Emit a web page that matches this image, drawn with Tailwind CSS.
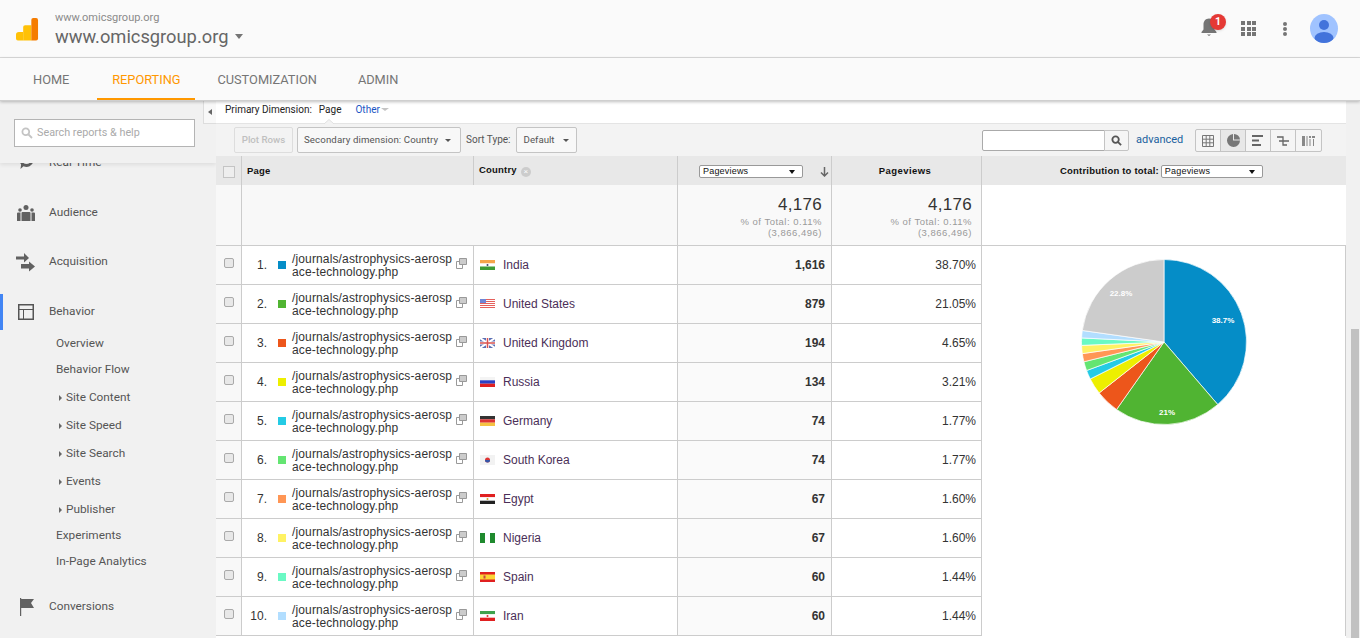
<!DOCTYPE html>
<html lang="en">
<head>
    <meta charset="UTF-8">
    <title>Analytics</title>
    <script src="https://cdn.jsdelivr.net/npm/@tailwindcss/browser@4"></script>
</head>
<body class="h-screen overflow-hidden bg-white font-['Roboto',sans-serif] text-[#333]">

    <!-- top bar -->
    <header class="h-[58px] flex items-center bg-[#fafafa] border-b border-[#dcdcdc] relative">
        <svg class="w-[23px] h-[23px] ml-4 shrink-0 mt-[2px]" viewBox="0 0 24 24">
            <path d="M0 17.500a3 3 0 0 1 3-3h4.500v9H2a2 2 0 0 1-2-2z" fill="#ffc107"/>
            <path d="M7.500 9.500a2 2 0 0 1 2-2h6.500v16h-8.500z" fill="#ffc107"/>
            <path d="M16 2a2 2 0 0 1 2-2h3a2 2 0 0 1 2 2v19.500a2 2 0 0 1-2 2h-5z" fill="#f57c00"/>
        </svg>
        <div class="ml-[16px] mt-[2px]">
            <div class="text-[11px] leading-[15px] text-[#8a8a8a]">www.omicsgroup.org</div>
            <div class="flex items-center text-[18.300px] leading-[24px] text-[#666]">
                www.omicsgroup.org
                <span class="ml-[7px] mt-[-1px] border-x-[4.500px] border-x-transparent border-t-[5px] border-t-[#757575]"></span>
            </div>
        </div>
        <div class="ml-auto flex items-center">
            <div class="relative w-[18px] h-[20px] mr-[23px] mb-[4px]">
                <svg class="w-[18px] h-[20px]" viewBox="0 0 18 20"><path d="M9 1.500c-3.500 0-5.500 2.800-5.500 6v5L1.500 15v1h15v-1l-2-2.500v-5c0-3.200-2-6-5.500-6zM7 17.500h4l-2 1.500z" fill="#757575"/></svg>
                <span class="absolute left-[10px] top-[-3px] w-4 h-4 rounded-full bg-[#e53935] text-white text-[10.500px] font-bold leading-4 text-center shadow">1</span>
            </div>
            <div class="grid grid-cols-3 gap-[1.500px] w-[15px] mr-[27px]">
                <i class="block w-1 h-1 bg-[#757575]"></i><i class="block w-1 h-1 bg-[#757575]"></i><i class="block w-1 h-1 bg-[#757575]"></i>
                <i class="block w-1 h-1 bg-[#757575]"></i><i class="block w-1 h-1 bg-[#757575]"></i><i class="block w-1 h-1 bg-[#757575]"></i>
                <i class="block w-1 h-1 bg-[#757575]"></i><i class="block w-1 h-1 bg-[#757575]"></i><i class="block w-1 h-1 bg-[#757575]"></i>
            </div>
            <div class="flex flex-col gap-[1px] mr-[23px]">
                <i class="block w-1 h-1 rounded-full bg-[#757575]"></i><i class="block w-1 h-1 rounded-full bg-[#757575]"></i><i class="block w-1 h-1 rounded-full bg-[#757575]"></i>
            </div>
            <svg class="w-[28px] h-[29px] mr-[22px]" viewBox="0 0 28 29">
                <defs><clipPath id="avatarClip"><ellipse cx="14" cy="14.500" rx="14" ry="14.500"/></clipPath></defs>
                <ellipse cx="14" cy="14.500" rx="14" ry="14.500" fill="#a0c3ff"/>
                <g clip-path="url(#avatarClip)" fill="#4273db"><circle cx="14" cy="11" r="5"/><ellipse cx="14" cy="24" rx="9.500" ry="6"/></g>
            </svg>
        </div>
    </header>

    <!-- tabs -->
    <nav class="h-[43px] flex bg-[#fafafa] border-b border-[#cfcfcf] shadow-[0_1px_3px_rgba(0,0,0,0.25)] relative z-20 text-[12.800px] text-[#757575]">
        <a class="ml-[33px] leading-[43px]">HOME</a>
        <a class="ml-[28px] w-[98px] text-center leading-[43px] text-[#ff9800] border-b-2 border-[#ff9800] h-[42px] box-border">REPORTING</a>
        <a class="ml-[22px] leading-[43px]">CUSTOMIZATION</a>
        <a class="ml-[41px] leading-[43px]">ADMIN</a>
    </nav>

    <div class="flex h-[537px]">
        <!-- sidebar -->
        <aside class="w-[216px] shrink-0 bg-[#f1f1f1] relative overflow-hidden text-[11.800px] text-[#555]">
            <div class="relative z-10 h-[62px] bg-[#f1f1f1] shadow-[0_2px_4px_rgba(0,0,0,0.08)] pt-[18px] pl-[14px]">
                <div class="w-[181px] h-[28px] bg-white border border-[#b4b4b4] flex items-center pl-[6px] text-[#aaa] text-[10.800px]">
                    <svg class="w-[12px] h-[12px] mr-[4px]" viewBox="0 0 12 12" fill="none" stroke="#c4c4c4" stroke-width="1.800"><circle cx="4.800" cy="4.800" r="3.400"/><path d="M7.500 7.500L11 11"/></svg>
                    Search reports &amp; help
                </div>
            </div>
            <div class="absolute top-[52px] left-0 w-full flex items-center h-5 pl-[49px]">
                <svg class="absolute left-[18px] top-[-2px] w-[17px] h-[20px]" viewBox="0 0 17 20"><path d="M8.500 2a7 7 0 1 1-3 13.300L2.500 18l.6-4.500A7 7 0 0 1 8.500 2zm0 3a4 4 0 1 0 0 8 4 4 0 0 0 0-8z" fill="#616161"/></svg>
                Real-Time
            </div>
            <!-- Real-Time sits beneath the search panel, flow picks up at Audience -->
            <div class="mt-[40px]">
                <div class="h-5 flex items-center">
                    <svg class="w-[18px] h-[16px] ml-[17px] mr-[14px]" viewBox="0 0 18 16" fill="#616161"><circle cx="9" cy="2.500" r="2.500"/><circle cx="3" cy="5" r="1.800"/><circle cx="15" cy="5" r="1.800"/><path d="M5.500 7h7a1 1 0 0 1 1 1v8h-9V8a1 1 0 0 1 1-1zM0 8.500a1 1 0 0 1 1-1h2.500V16H0zM14.500 7.500H17a1 1 0 0 1 1 1V16h-3.500z"/></svg>
                    Audience
                </div>
                <div class="h-5 flex items-center mt-[29px]">
                    <svg class="w-[19px] h-[19px] ml-[16px] mr-[14px]" viewBox="0 0 19 19" fill="#616161"><path d="M0 3.500h8V0l5 5-5 4.500V6.500H0zM5 11h8V8.500l6 5-6 5v-3H5z"/></svg>
                    Acquisition
                </div>
                <div class="h-[36px] flex items-center mt-[22px] border-l-[3px] border-[#4285f4]">
                    <svg class="w-4 h-4 ml-[15px] mr-[15px]" viewBox="0 0 16 16" fill="none" stroke="#555" stroke-width="1.500"><rect x="0.750" y="0.750" width="14.500" height="14.500"/><path d="M1 5.500h14M5.500 5.500V15" stroke-width="1"/></svg>
                    Behavior
                </div>
                <ul class="ml-[56px]">
                    <li class="h-[26px] leading-[26px]">Overview</li>
                    <li class="h-[26px] leading-[26px]">Behavior Flow</li>
                    <li class="h-[28px] mt-[2px] flex items-center"><span class="ml-[3px] mr-[4px] border-y-[3.500px] border-y-transparent border-l-[3px] border-l-[#666]"></span>Site Content</li>
                    <li class="h-[28px] flex items-center"><span class="ml-[3px] mr-[4px] border-y-[3.500px] border-y-transparent border-l-[3px] border-l-[#666]"></span>Site Speed</li>
                    <li class="h-[28px] flex items-center"><span class="ml-[3px] mr-[4px] border-y-[3.500px] border-y-transparent border-l-[3px] border-l-[#666]"></span>Site Search</li>
                    <li class="h-[28px] flex items-center"><span class="ml-[3px] mr-[4px] border-y-[3.500px] border-y-transparent border-l-[3px] border-l-[#666]"></span>Events</li>
                    <li class="h-[28px] flex items-center"><span class="ml-[3px] mr-[4px] border-y-[3.500px] border-y-transparent border-l-[3px] border-l-[#666]"></span>Publisher</li>
                    <li class="h-[26px] leading-[26px] mt-[-2px]">Experiments</li>
                    <li class="h-[26px] leading-[26px]">In-Page Analytics</li>
                </ul>
                <div class="h-5 flex items-center mt-[23px]">
                    <svg class="w-[15px] h-[18px] ml-[20px] mr-[14px]" viewBox="0 0 15 18" fill="#616161"><path d="M0 0h1.200v18H0zM1.200 1H14l-3 4 3 5H1.200z"/></svg>
                    Conversions
                </div>
            </div>
        </aside>

        <!-- report -->
        <main class="w-[1130px] shrink-0 font-['Liberation_Sans',sans-serif] relative">
            <button class="absolute left-[-13px] top-0 w-[13px] h-[23px] bg-[#f8f8f8] border-l border-b border-[#ddd] flex items-center justify-center z-10">
                <span class="border-y-[3px] border-y-transparent border-r-[4px] border-r-[#666]"></span>
            </button>
            <div class="h-[23px] bg-white border-b border-[#e4e4e4] flex items-center pl-[9px] pb-[5px] text-[10px] text-[#222] font-['Roboto',sans-serif] relative">
                Primary Dimension:
                <span class="ml-[7px] text-[#222]">Page</span>
                <span class="ml-[14px] text-[#1a56c4]">Other</span>
                <span class="ml-[1px] border-x-[4px] border-x-transparent border-t-[3px] border-t-[#c4c4c4]"></span>
                <svg class="absolute left-[108px] bottom-[-1px] w-[10px] h-[5px]" viewBox="0 0 10 5"><path d="M0 5l5-4.500L10 5" fill="#f3f3f3" stroke="#e0e0e0"/></svg>
            </div>
            <!-- toolbar -->
            <div class="h-[32px] bg-[#f3f3f3] flex items-center pl-[18px] text-[9.700px] text-[#555] font-['Roboto',sans-serif] relative">
                <div class="w-[59px] h-[26px] rounded-[2px] border border-[#ddd] flex items-center justify-center text-[#c0c0c0] font-medium">Plot Rows</div>
                <div class="ml-[4px] w-[164px] h-[26px] rounded-[2px] border border-[#c4c4c4] bg-[#f8f8f8] flex items-center pl-[6px] tracking-[0.1px]">
                    Secondary dimension: Country
                    <span class="ml-[7px] border-x-[3.500px] border-x-transparent border-t-[3px] border-t-[#555]"></span>
                </div>
                <span class="ml-[5px] text-[10px] mb-[2px]">Sort Type:</span>
                <div class="ml-[5px] w-[61px] h-[26px] rounded-[2px] border border-[#c4c4c4] bg-[#f8f8f8] flex items-center pl-[7px]">
                    Default
                    <span class="ml-auto mr-[7px] border-x-[3.500px] border-x-transparent border-t-[3px] border-t-[#555]"></span>
                </div>
                <div class="absolute left-[766px] top-[6px] w-[123px] h-[21px] bg-white border border-[#aaa] rounded-l-[2px]"></div>
                <div class="absolute left-[888px] top-[6px] w-[25px] h-[21px] bg-[#f5f5f5] border border-[#c4c4c4] rounded-r-[2px] flex items-center justify-center">
                    <svg class="w-[11px] h-[11px]" viewBox="0 0 12 12" fill="none" stroke="#555" stroke-width="2"><circle cx="5" cy="5" r="3.500"/><path d="M7.500 7.500L11 11"/></svg>
                </div>
                <a class="absolute left-[920px] top-[8px] text-[11px] text-[#1a5f9e]">advanced</a>
                <div class="absolute left-[979px] top-[5px] h-[23px] flex border border-[#c4c4c4] rounded-[2px] bg-[#f5f5f5]">
                    <span class="w-[25px] flex items-center justify-center border-r border-[#c4c4c4]"><svg class="w-[12px] h-[12px]" viewBox="0 0 12 12" fill="none" stroke="#777"><path d="M.5.500h11v11H.5zM4.200.500v11M7.800.500v11M.5 4.200h11M.5 7.800h11"/></svg></span>
                    <span class="w-[25px] flex items-center justify-center border-r border-[#c4c4c4] bg-[#e8e8e8]"><svg class="w-[13px] h-[13px]" viewBox="0 0 13 13"><path d="M6 0v6.500h7A6.500 6.500 0 1 1 6 0zM7 0a6 6 0 0 1 6 5.500H7z" fill="#777"/></svg></span>
                    <span class="w-[25px] flex items-center justify-center border-r border-[#c4c4c4]"><svg class="w-[12px] h-[11px]" viewBox="0 0 12 11" fill="#666"><path d="M0 0h11v2H0zM0 4.500h7v2H0zM0 9h9v2H0z"/></svg></span>
                    <span class="w-[25px] flex items-center justify-center border-r border-[#c4c4c4]"><svg class="w-[12px] h-[12px]" viewBox="0 0 12 12" fill="none" stroke="#666" stroke-width="1.300"><path d="M0 2h6v4h6M2 6h4v4h4"/></svg></span>
                    <span class="w-[25px] flex items-center justify-center"><svg class="w-[13px] h-[10px]" viewBox="0 0 13 10" fill="#888"><path d="M0 0h3v10H0zM4.500 0h1v10h-1zM7 0h2v2H7zM7.500 3h1v7h-1zM10 0h3v2h-3zM11 3h1v7h-1z"/></svg></span>
                </div>
            </div>
            <!-- column heads -->
            <div class="h-[29px] bg-[#e8e8e8] grid grid-cols-[26px_232px_204px_154px_150px_365px] text-[9.500px] font-bold text-[#111] tracking-[0.2px]">
                <div class="flex items-center justify-center border-r border-[#ccc] pt-[2px]"><span class="w-[12px] h-[12px] border border-[#c4c4c4] bg-[#eee]"></span></div>
                <div class="flex items-center pl-[5px] pt-[2px] border-r border-[#ccc]">Page</div>
                <div class="flex items-center pl-[5px] border-r border-[#ccc]">Country<span class="ml-[4px] mt-[2px] w-[10px] h-[10px] rounded-full bg-[#ccc] text-white text-[8px] leading-[10px] text-center font-normal">×</span></div>
                <div class="flex items-center pl-[21px] pt-[2px] border-r border-[#ccc] font-normal">
                    <span class="w-[104px] h-[13px] bg-white border border-[#999] rounded-[2px] flex items-center pl-[3px] text-[9px]">Pageviews<span class="ml-auto mr-[7px] border-x-[3px] border-x-transparent border-t-[4px] border-t-[#111]"></span></span>
                    <svg class="ml-[17px] w-[9px] h-[10px]" viewBox="0 0 9 10" fill="none" stroke="#666" stroke-width="1.500"><path d="M4.500 0v9M1 5.500l3.500 3.500 3.500-3.500"/></svg>
                </div>
                <div class="flex items-center justify-center pr-[3px] pt-[2px] border-r border-[#ccc] tracking-[0.45px]">Pageviews</div>
                <div class="flex items-center pl-[78px] pt-[2px] border-r border-[#ccc]">Contribution to total:
                    <span class="ml-[2px] w-[102px] h-[13px] bg-white border border-[#999] rounded-[2px] flex items-center pl-[3px] text-[9px] font-normal">Pageviews<span class="ml-auto mr-[7px] border-x-[3px] border-x-transparent border-t-[4px] border-t-[#111]"></span></span>
                </div>
            </div>
            <!-- totals -->
            <div class="h-[61px] grid grid-cols-[26px_232px_204px_154px_150px_365px] border-b border-[#ccc]">
                <div class="bg-[#f8f8f8] border-r border-[#ccc]"></div>
                <div class="bg-[#f8f8f8] col-span-2 border-r border-[#ccc]"></div>
                <div class="bg-[#f9f9f9] border-r border-[#ccc] text-right pr-[9px] pt-[10px] text-[#333]">
                    <div class="text-[17px] leading-[20px] tracking-[0.3px]">4,176</div>
                    <div class="text-[9.500px] leading-[11px] mt-[1px] text-[#999] tracking-[0.5px]">% of Total: 0.11%<br>(3,866,496)</div>
                </div>
                <div class="bg-[#f9f9f9] border-r border-[#ccc] text-right pr-[9px] pt-[10px] text-[#333]">
                    <div class="text-[17px] leading-[20px] tracking-[0.3px]">4,176</div>
                    <div class="text-[9.500px] leading-[11px] mt-[1px] text-[#999] tracking-[0.5px]">% of Total: 0.11%<br>(3,866,496)</div>
                </div>
                <div class="border-r border-[#ccc]"></div>
            </div>
            <!-- rows and chart -->
            <div class="flex">
                <div id="rows" class="w-[765px]"></div>
                <div class="w-[365px] h-[390px] pt-[12px] pl-[98px] border-x border-[#ccc]">
                    <svg id="pie" width="170" height="170" viewBox="0 0 170 170"></svg>
                </div>
            </div>
        </main>

        <!-- scrollbar -->
        <div class="flex-1 bg-[#f1f1f1] relative">
            <div class="absolute left-[5px] right-[1px] top-[228px] bottom-0 bg-[#c1c1c1]"></div>
        </div>
    </div>

    <script>
        const linkIcon = `<svg class="w-[11px] h-[11px] shrink-0 mt-[-3px]" viewBox="0 0 11 11" fill="none" stroke="#999"><path d="M3.500 .5h7v6h-7z" fill="#ccc"/><path d="M3.500 3.500H.5v7h6V7"/></svg>`;

        const flags = {
            India: `<rect width="15" height="3.500" y="0" fill="#f5a54a"/><rect width="15" height="3" y="3.500" fill="#fff"/><rect width="15" height="3.500" y="6.500" fill="#3f9c35"/><circle cx="7.500" cy="5" r="1" fill="#446"/>`,
            "United States": `<rect width="15" height="10" fill="#fff"/><path d="M0 .5h15M0 2.500h15M0 4.500h15M0 6.500h15M0 8.500h15" stroke="#e5605c"/><rect width="6" height="4" fill="#6f86d6"/>`,
            "United Kingdom": `<rect width="15" height="10" fill="#5a6fb5"/><path d="M0 0l15 10M15 0L0 10" stroke="#fff" stroke-width="2"/><path d="M7.500 0v10M0 5h15" stroke="#fff" stroke-width="3"/><path d="M7.500 0v10M0 5h15" stroke="#d9534f" stroke-width="1.500"/>`,
            Russia: `<rect width="15" height="3.300" fill="#f4f4f4"/><rect width="15" height="3.400" y="3.300" fill="#2b3fc4"/><rect width="15" height="3.300" y="6.700" fill="#e02020"/>`,
            Germany: `<rect width="15" height="3.300" fill="#333"/><rect width="15" height="3.400" y="3.300" fill="#d33"/><rect width="15" height="3.300" y="6.700" fill="#f5c242"/>`,
            "South Korea": `<rect width="15" height="10" fill="#f2f2f2"/><circle cx="7.500" cy="5" r="2.500" fill="#d33"/><path d="M5 5a2.500 2.500 0 0 0 5 0z" fill="#35a"/>`,
            Egypt: `<rect width="15" height="3.300" fill="#e02020"/><rect width="15" height="3.400" y="3.300" fill="#fff"/><rect width="15" height="3.300" y="6.700" fill="#222"/><circle cx="7.500" cy="5" r="1" fill="#c9a227"/>`,
            Nigeria: `<rect width="5" height="10" fill="#1f8a2e"/><rect width="5" height="10" x="5" fill="#fff"/><rect width="5" height="10" x="10" fill="#1f8a2e"/>`,
            Spain: `<rect width="15" height="10" fill="#e02020"/><rect width="15" height="5" y="2.500" fill="#fbd536"/><rect width="2" height="3" x="3.500" y="3.500" fill="#c44"/>`,
            Iran: `<rect width="15" height="3.300" fill="#3fa34d"/><rect width="15" height="3.400" y="3.300" fill="#fff"/><rect width="15" height="3.300" y="6.700" fill="#e02020"/><circle cx="7.500" cy="5" r="1" fill="#d33"/>`
        };

        const rowData = [
            ["India", "1,616", "38.70%", "#058dc7"],
            ["United States", "879", "21.05%", "#50b432"],
            ["United Kingdom", "194", "4.65%", "#ed561b"],
            ["Russia", "134", "3.21%", "#edef00"],
            ["Germany", "74", "1.77%", "#24cbe5"],
            ["South Korea", "74", "1.77%", "#64e572"],
            ["Egypt", "67", "1.60%", "#ff9655"],
            ["Nigeria", "67", "1.60%", "#fff263"],
            ["Spain", "60", "1.44%", "#6af9c4"],
            ["Iran", "60", "1.44%", "#b2deff"]
        ];

        document.getElementById("rows").innerHTML = rowData.map((r, i) => `
            <div class="h-[39px] grid grid-cols-[26px_232px_204px_154px_149px] border-b border-[#ccc] text-[12px] text-[#333]">
                <div class="bg-[#f8f8f8] border-r border-[#ccc] flex items-center justify-center pb-[5px]"><span class="w-[10px] h-[10px] rounded-[2px] border border-[#aaa] bg-[#e8e8e8]"></span></div>
                <div class="border-r border-[#ccc] flex items-center">
                    <span class="w-[25px] text-right text-[12px]">${i + 1}.</span>
                    <span class="ml-[11px] w-2 h-2 shrink-0" style="background:${r[3]}"></span>
                    <span class="ml-[6px] mt-[2px] w-[164px] leading-[13px] break-all tracking-[0.14px]">/journals/astrophysics-aerospace-technology.php</span>
                    ${linkIcon}
                </div>
                <div class="border-r border-[#ccc] flex items-center pl-[6px]">
                    <svg class="w-[15px] h-[10px] shrink-0" viewBox="0 0 15 10">${flags[r[0]]}</svg>
                    <span class="ml-[8px] text-[#4b2f58]">${r[0]}</span>
                </div>
                <div class="bg-[#fafafa] border-r border-[#ccc] flex items-center justify-end pr-[6px] font-bold">${r[1]}</div>
                <div class="flex items-center justify-end pr-[5px]">${r[2]}</div>
            </div>`).join("");

        // pie slices, same order as the rows, grey remainder last
        const slices = [38.7, 21.05, 4.65, 3.21, 1.77, 1.77, 1.6, 1.6, 1.44, 1.44, 22.77];
        const colors = rowData.map(r => r[3]).concat("#cccccc");
        const cx = 84, cy = 84, rad = 82.5;
        let angle = 0, out = "";
        slices.forEach((v, i) => {
            const next = angle + v / 100 * Math.PI * 2;
            const x1 = cx + rad * Math.sin(angle), y1 = cy - rad * Math.cos(angle);
            const x2 = cx + rad * Math.sin(next), y2 = cy - rad * Math.cos(next);
            const big = next - angle > Math.PI ? 1 : 0;
            out += `<path d="M${cx} ${cy}L${x1} ${y1}A${rad} ${rad} 0 ${big} 1 ${x2} ${y2}Z" fill="${colors[i]}" stroke="#fff" stroke-width="0.7"/>`;
            angle = next;
        });
        const label = "font-family:'Liberation Sans',sans-serif;font-size:8px;font-weight:bold;fill:#fff";
        out += `<text x="143" y="65" text-anchor="middle" style="${label}">38.7%</text>`;
        out += `<text x="87" y="157" text-anchor="middle" style="${label}">21%</text>`;
        out += `<text x="41" y="38" text-anchor="middle" style="${label}">22.8%</text>`;
        document.getElementById("pie").innerHTML = out;
    </script>
</body>
</html>
